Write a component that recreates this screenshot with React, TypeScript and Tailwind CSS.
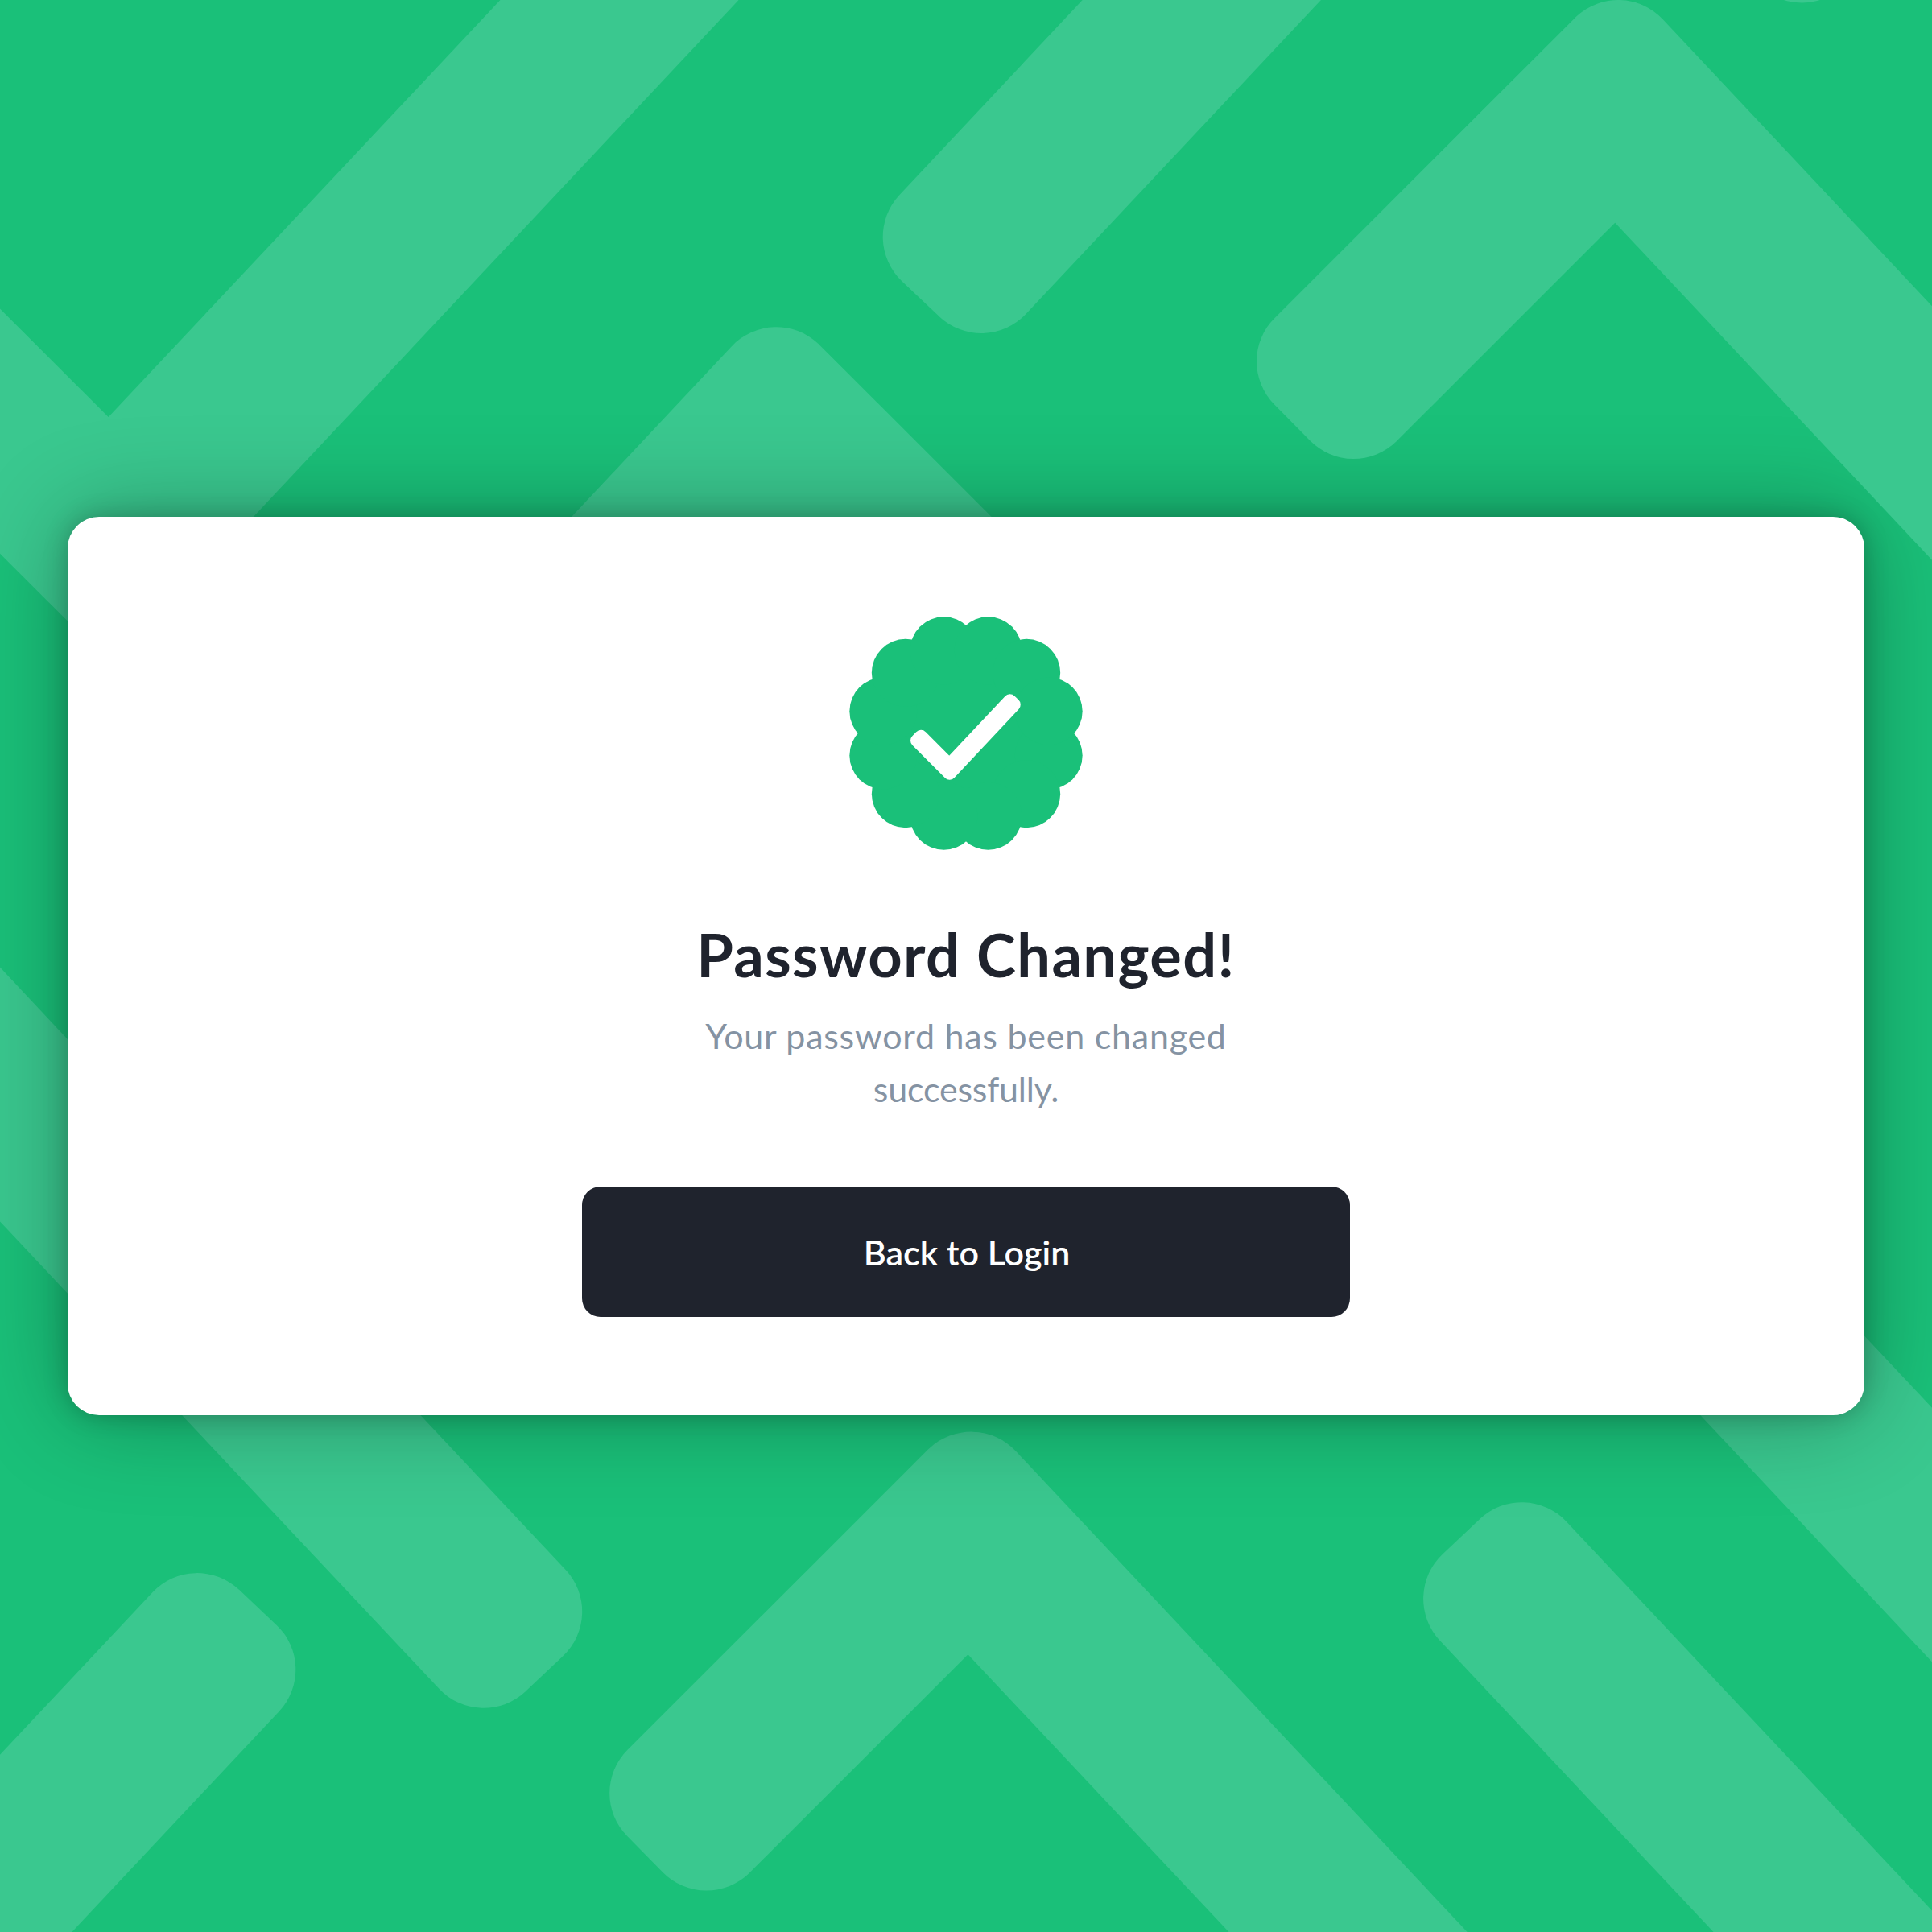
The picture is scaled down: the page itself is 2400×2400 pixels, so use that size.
import React from 'react';

const CHECK_POINTS = '0,0 -373.2,372.9 -328.8,418 -2.2,91.5 690.4,828.6 736.8,784.8';

type Mark = { x: number; y: number; sx: number; sy: number };

const MARKS: Mark[] = [
  { x: 138.6, y: 718.7, sx: 1, sy: -1 },
  { x: 1909.5, y: -490.6, sx: -1, sy: 1 },
  { x: 964.3, y: 482.2, sx: -1, sy: 1 },
  { x: -89.6, y: 1217.2, sx: 1, sy: 1 },
  { x: -445.5, y: 2858.7, sx: 1, sy: -1 },
  { x: 1206.4, y: 1854.6, sx: 1, sy: 1 },
  { x: 2580.9, y: 2770.8, sx: -1, sy: -1 },
  { x: 2536.8, y: 2099.2, sx: -1, sy: -1 },
];

const FRONT_MARK: Mark = { x: 2010.2, y: 76, sx: 1, sy: 1 };

function CheckShape({ x, y, sx, sy }: Mark) {
  return (
    <polygon
      points={CHECK_POINTS}
      transform={`translate(${x} ${y}) scale(${sx} ${sy})`}
      fill="currentColor"
      stroke="currentColor"
      strokeWidth={152}
      strokeLinejoin="round"
    />
  );
}

function Pattern({ marks }: { marks: Mark[] }) {
  return (
    <svg
      className="pointer-events-none absolute inset-0 h-full w-full text-[#3ac88f]"
      viewBox="0 0 2400 2400"
      aria-hidden="true"
    >
      {marks.map((m, i) => (
        <CheckShape key={i} {...m} />
      ))}
    </svg>
  );
}

function SuccessBadge() {
  const petals = Array.from({ length: 12 }, (_, i) => ((i * 30 + 15) * Math.PI) / 180);
  return (
    <svg className="size-[290px] text-[#1ac079]" viewBox="-145 -145 290 290" aria-hidden="true">
      <circle r={108} fill="currentColor" />
      {petals.map((a, i) => (
        <circle key={i} cx={106.3 * Math.cos(a)} cy={106.3 * Math.sin(a)} r={42} fill="currentColor" />
      ))}
      <g className="text-white" transform="translate(-20.3 49.4) scale(0.10838)">
        <CheckShape x={0} y={0} sx={1} sy={-1} />
      </g>
    </svg>
  );
}

export default function App() {
  return (
    <div className="relative flex h-[2400px] w-[2400px] items-center justify-center overflow-hidden bg-[#1ac079] font-[Lato,sans-serif]">
      <Pattern marks={MARKS} />
      <main className="relative flex h-[1116px] w-[2232px] flex-col items-center rounded-[39px] bg-white pt-[123.5px] shadow-[0_0_30px_rgba(0,0,0,0.22),0_0_120px_rgba(0,0,0,0.3)]">
        <SuccessBadge />
        <h1 className="mt-[82.5px] text-[74px] leading-[96px] font-bold tracking-[1.4px] whitespace-nowrap text-[#1f232d]">
          Password Changed!
        </h1>
        <p className="mt-[20px] w-[760px] text-center text-[43px] leading-[66px] text-[#8593a3]">
          <span className="tracking-[0.75px]">Your password has been changed</span>
          <br />
          <span className="tracking-[-0.2px]">successfully.</span>
        </p>
        <button className="mt-[88px] flex h-[162px] w-[954px] items-center justify-center rounded-[23px] bg-[#1f232d] pt-[2px] pl-[2px] text-[43px] font-semibold text-white">
          Back to Login
        </button>
      </main>
      <Pattern marks={[FRONT_MARK]} />
    </div>
  );
}
